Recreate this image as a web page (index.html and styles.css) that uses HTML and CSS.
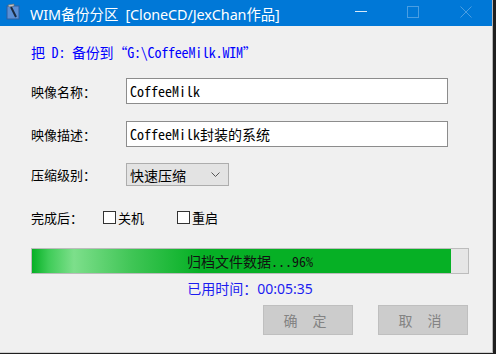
FILE: index.html
```html
<!DOCTYPE html>
<html lang="zh-CN">

<head>
    <meta charset="UTF-8">
    <meta name="viewport" content="width=device-width, initial-scale=1.0">
    <title>WIM备份分区</title>
    <link rel="stylesheet" href="styles.css">
</head>

<body>
    <div class="window">
        <div class="titlebar">
            <svg class="app-icon" width="14" height="17" viewBox="0 0 14 17">
                <rect x="1" y="3" width="12" height="13" fill="#5b8fd6" />
                <rect x="1" y="3" width="12" height="13" fill="none" stroke="#2e5e9f" stroke-width="1" />
                <path d="M5 4 L10 14" stroke="#1b2a3f" stroke-width="2" />
                <path d="M2 2 L8 1 L8 3 L3 4 Z" fill="#c8c8c8" stroke="#6d6d6d" stroke-width="0.6" />
            </svg>
            <span class="title-text">WIM备份分区  [CloneCD/JexChan作品]</span>
            <div class="caption-buttons">
                <svg class="cap cap-min" width="12" height="12" viewBox="0 0 12 12">
                    <path d="M0 7.5 H12" stroke="#d6e9f8" stroke-width="1" />
                </svg>
                <svg class="cap cap-max" width="12" height="12" viewBox="0 0 12 12">
                    <rect x="0.5" y="0.5" width="11" height="11" fill="none" stroke="#4a9ee2" stroke-width="1" />
                </svg>
                <svg class="cap cap-close" width="12" height="12" viewBox="0 0 12 12">
                    <path d="M0.5 0.5 L11.5 11.5 M11.5 0.5 L0.5 11.5" stroke="#4a9ee2" stroke-width="1" />
                </svg>
            </div>
        </div>

        <div class="content">
            <div class="path">把 D: 备份到“G:\CoffeeMilk.WIM”</div>

            <div class="form-row first">
                <span class="label">映像名称：</span>
                <input class="text-box" type="text" value="CoffeeMilk">
            </div>

            <div class="form-row">
                <span class="label">映像描述：</span>
                <input class="text-box" type="text" value="CoffeeMilk封装的系统">
            </div>

            <div class="form-row combo-row">
                <span class="label">压缩级别：</span>
                <div class="combo">
                    <span>快速压缩</span>
                    <svg width="9" height="5" viewBox="0 0 9 5">
                        <path d="M0.5 0.5 L4.5 4.5 L8.5 0.5" fill="none" stroke="#555" stroke-width="1" />
                    </svg>
                </div>
            </div>

            <div class="after-row">
                <span class="label short">完成后：</span>
                <label class="check"><span class="box"></span>关机</label>
                <label class="check second"><span class="box"></span>重启</label>
            </div>

            <div class="progress">
                <div class="progress-fill" style="width: 96%;"></div>
                <div class="progress-text">归档文件数据...96%</div>
            </div>

            <div class="elapsed">已用时间：00:05:35</div>

            <div class="buttons">
                <button class="btn" disabled>确 定</button>
                <button class="btn" disabled>取 消</button>
            </div>
        </div>
    </div>
</body>

</html>
```

FILE: styles.css
```css
html {
    background: #1f1f1f;
}

body {
    margin: 0;
    font-family: "Noto Sans", "Noto Sans CJK SC", sans-serif;
}

.window {
    width: 492px;
    height: 352px;
    background: #f0f0f0;
    border-right: 1px solid #b5b5b5;
    border-bottom: 1px solid #cfcfcf;
}

.titlebar {
    height: 26px;
    background: #0078d7;
    display: flex;
    align-items: center;
    color: #fff;
}

.app-icon {
    margin-left: 6px;
    margin-top: -3px;
}

.title-text {
    margin-left: 10px;
    font-size: 14.4px;
    white-space: pre;
    letter-spacing: -0.1px;
}

.caption-buttons {
    margin-left: auto;
    display: flex;
    align-items: center;
    margin-top: -3px;
}

.cap-min {
    margin-right: 40px;
    margin-top: -3px;
}

.cap-max {
    margin-right: 41px;
}

.cap-close {
    margin-right: 20px;
}

.path {
    margin-top: 16px;
    height: 20px;
    line-height: 20px;
    color: #0000ff;
    font-size: 14px;
    font-family: "Noto Sans Mono CJK SC", "Liberation Mono", monospace;
    letter-spacing: -0.2px;
}

.content {
    padding-left: 31px;
}

.form-row {
    display: flex;
    align-items: center;
    height: 26px;
    margin-top: 17px;
}

.form-row.first {
    margin-top: 16px;
}

.label {
    width: 95px;
    font-size: 13px;
    color: #000;
}

.label.short {
    width: 72px;
}

.text-box {
    box-sizing: border-box;
    width: 322px;
    height: 26px;
    margin: 0;
    padding: 0 3px;
    border: 1px solid #8c8c8c;
    background: #fff;
    font-family: "Noto Sans Mono CJK SC", "Liberation Mono", monospace;
    font-size: 14px;
    color: #000;
    outline: none;
}

.combo-row {
    height: 23px;
    margin-top: 16px;
}

.combo {
    box-sizing: border-box;
    width: 103px;
    height: 23px;
    background: #e3e3e3;
    border: 1px solid #adadad;
    display: flex;
    align-items: center;
    justify-content: space-between;
    padding: 0 8px 0 3px;
    font-size: 14px;
}

.after-row {
    display: flex;
    align-items: center;
    height: 14px;
    margin-top: 24px;
    font-size: 13px;
}

.check {
    display: flex;
    align-items: center;
}

.check.second {
    margin-left: 33px;
}

.box {
    box-sizing: border-box;
    width: 13px;
    height: 13px;
    border: 1px solid #333;
    background: #fff;
    margin-right: 2px;
}

.progress {
    position: relative;
    box-sizing: border-box;
    width: 438px;
    height: 26px;
    margin-top: 24px;
    background: #e6e6e6;
    border: 1px solid #bcbcbc;
}

.progress-fill {
    height: 100%;
    background: linear-gradient(90deg, #06b025 0%, #3fcc58 4%, #7ddf8b 10%, #3fc555 24%, #06b025 40%, #06b025 100%);
}

.progress-text {
    position: absolute;
    left: 0;
    right: 0;
    top: 0;
    line-height: 24px;
    text-align: center;
    font-family: "Noto Sans Mono CJK SC", "Liberation Mono", monospace;
    font-size: 14px;
    color: #111;
}

.elapsed {
    width: 438px;
    margin-top: 5px;
    height: 20px;
    line-height: 20px;
    text-align: center;
    color: #1c1cf0;
    font-size: 14px;
}

.buttons {
    width: 437px;
    display: flex;
    justify-content: flex-end;
    gap: 25px;
    margin-top: 6px;
}

.btn {
    width: 90px;
    height: 30px;
    margin: 0;
    background: #cccccc;
    border: 1px solid #bfbfbf;
    color: #838383;
    font-family: "Noto Sans CJK SC", sans-serif;
    font-size: 14px;
    letter-spacing: 6px;
    padding-left: 6px;
}
```
